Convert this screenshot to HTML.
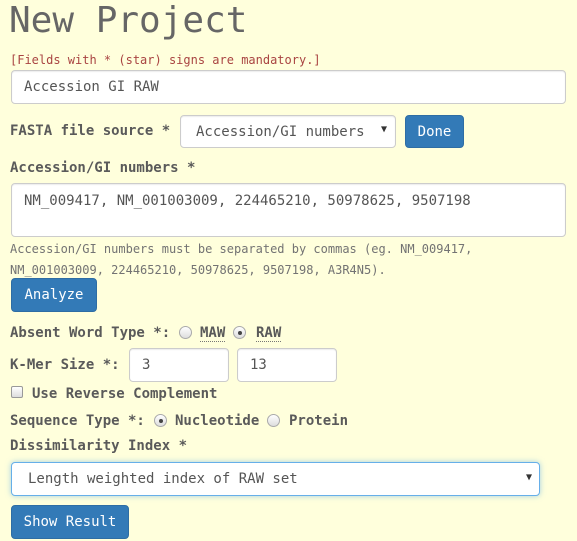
<!DOCTYPE html>
<html><head><style>
body{margin:0;background:#ffffdc;font-family:"DejaVu Sans Mono","Liberation Mono",monospace;color:#555;width:577px;height:541px;overflow:hidden;position:relative}
.a{position:absolute;white-space:pre}
.lb{font-weight:bold;font-size:14px;color:#5a5a5a}
.in{position:absolute;background:#fff;border:1px solid #ccc;border-radius:4px;box-sizing:border-box;font-size:14px;color:#555;box-shadow:inset 0 1px 1px rgba(0,0,0,.075)}
.btn{position:absolute;background:#337ab7;border:1px solid #2e6da4;border-radius:4px;box-sizing:border-box;color:#fff;font-size:14px;text-align:center}
.rad{position:absolute;width:13px;height:13px;border-radius:50%;border:1px solid #aaa;background:linear-gradient(#fff,#ddd);box-sizing:border-box}
.rad.on::after{content:"";position:absolute;left:3.5px;top:3.5px;width:4px;height:4px;border-radius:50%;background:#444}
</style></head><body>
<div class="a" style="left:9px;top:-1px;font-size:36px;color:#666;line-height:44px">New Project</div>
<div class="a" style="left:10px;top:53px;font-size:12px;color:#a94442">[Fields with * (star) signs are mandatory.]</div>
<div class="in" style="left:11px;top:70px;width:555px;height:34px;padding:8px 12px">Accession GI RAW</div>
<div class="a lb" style="left:10px;top:123px">FASTA file source *</div>
<div class="in" style="left:180px;top:115px;width:216px;height:33px;padding:8px 15px">Accession/GI numbers</div>
<div class="a" style="left:381px;top:124px;font-size:10px;color:#333">▼</div>
<div class="btn" style="left:405px;top:115px;width:59px;height:33px;padding-top:8px">Done</div>
<div class="a lb" style="left:10px;top:160px">Accession/GI numbers *</div>
<div class="in" style="left:11px;top:183px;width:555px;height:54px;padding:9px 12px">NM_009417, NM_001003009, 224465210, 50978625, 9507198</div>
<div class="a" style="left:10px;top:239px;font-size:12px;color:#737373;line-height:21px">Accession/GI numbers must be separated by commas (eg. NM_009417,
NM_001003009, 224465210, 50978625, 9507198, A3R4N5).</div>
<div class="btn" style="left:11px;top:278px;width:86px;height:34px;padding-top:8px">Analyze</div>
<div class="a lb" style="left:10px;top:325px">Absent Word Type *:</div>
<div class="rad" style="left:179px;top:326px"></div>
<div class="a lb" style="left:200px;top:325px;border-bottom:1px dotted #777;line-height:16px">MAW</div>
<div class="rad on" style="left:233px;top:326px"></div>
<div class="a lb" style="left:256px;top:325px;border-bottom:1px dotted #777;line-height:16px">RAW</div>
<div class="a lb" style="left:10px;top:357px">K-Mer Size *:</div>
<div class="in" style="left:129px;top:348px;width:100px;height:34px;padding:8px 12px">3</div>
<div class="in" style="left:237px;top:348px;width:100px;height:34px;padding:8px 12px">13</div>
<div style="position:absolute;left:11px;top:386px;width:12px;height:12px;border:1px solid #999;border-radius:2px;background:linear-gradient(#fff,#ddd);box-sizing:border-box"></div>
<div class="a lb" style="left:32px;top:386px">Use Reverse Complement</div>
<div class="a lb" style="left:10px;top:413px">Sequence Type *:</div>
<div class="rad on" style="left:154px;top:414px"></div>
<div class="a lb" style="left:175px;top:413px">Nucleotide</div>
<div class="rad" style="left:267px;top:414px"></div>
<div class="a lb" style="left:289px;top:413px">Protein</div>
<div class="a lb" style="left:10px;top:438px">Dissimilarity Index *</div>
<div class="in" style="left:11px;top:462px;width:529px;height:34px;padding:8px 16px;border-color:#66afe9;box-shadow:0 0 6px rgba(102,175,233,.6)">Length weighted index of RAW set</div>
<div class="a" style="left:526px;top:472px;font-size:10px;color:#333">▼</div>
<div class="btn" style="left:11px;top:505px;width:118px;height:34px;padding-top:8px">Show Result</div>
</body></html>
